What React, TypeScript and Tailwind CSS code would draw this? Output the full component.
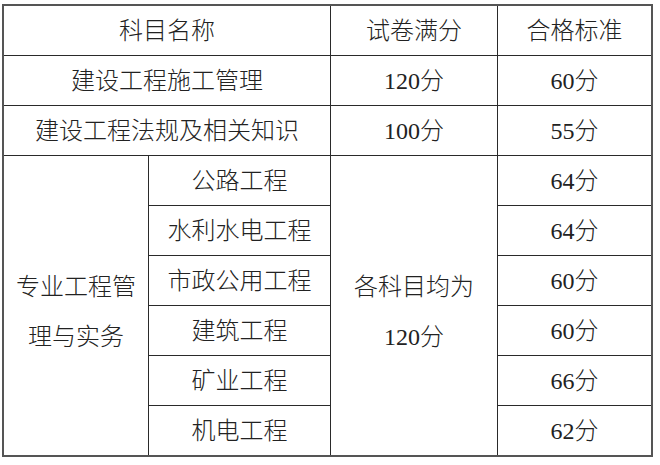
import React from "react";

const font = { fontFamily: '"Liberation Serif", "Noto Sans CJK SC", serif' };

function Cell({ children, className = "" }: { children: React.ReactNode; className?: string }) {
  return (
    <div className={`bg-white flex items-center justify-center text-[24px] text-[#222] ${className}`}>
      {children}
    </div>
  );
}

export default function App() {
  const subs = [
    { name: "公路工程", score: "64分", row: "row-start-4" },
    { name: "水利水电工程", score: "64分", row: "row-start-5" },
    { name: "市政公用工程", score: "60分", row: "row-start-6" },
    { name: "建筑工程", score: "60分", row: "row-start-7" },
    { name: "矿业工程", score: "66分", row: "row-start-8" },
    { name: "机电工程", score: "62分", row: "row-start-9" },
  ];
  return (
    <div className="w-[660px] h-[465px] bg-white pt-[4px] pl-[2px]" style={font}>
      <div className="w-[651px] border-2 border-[#555]">
        <div className="grid grid-cols-[144px_181px_166px_153px] grid-rows-[repeat(9,49px)] gap-px bg-[#2a2a2a] font-light">
          <Cell className="col-span-2">科目名称</Cell>
          <Cell>试卷满分</Cell>
          <Cell>合格标准</Cell>

          <Cell className="col-span-2">建设工程施工管理</Cell>
          <Cell>120分</Cell>
          <Cell>60分</Cell>

          <Cell className="col-span-2">建设工程法规及相关知识</Cell>
          <Cell>100分</Cell>
          <Cell>55分</Cell>

          <Cell className="row-span-6 col-start-1 row-start-4 flex-col leading-[50px] pt-3">
            <span>专业工程管</span>
            <span>理与实务</span>
          </Cell>
          {subs.map((s) => (
            <Cell key={s.name} className={`col-start-2 ${s.row}`}>
              {s.name}
            </Cell>
          ))}
          <Cell className="row-span-6 col-start-3 row-start-4 flex-col leading-[50px] pt-3">
            <span>各科目均为</span>
            <span>120分</span>
          </Cell>
          {subs.map((s) => (
            <Cell key={s.name + "s"} className={`col-start-4 ${s.row}`}>
              {s.score}
            </Cell>
          ))}
        </div>
      </div>
    </div>
  );
}
